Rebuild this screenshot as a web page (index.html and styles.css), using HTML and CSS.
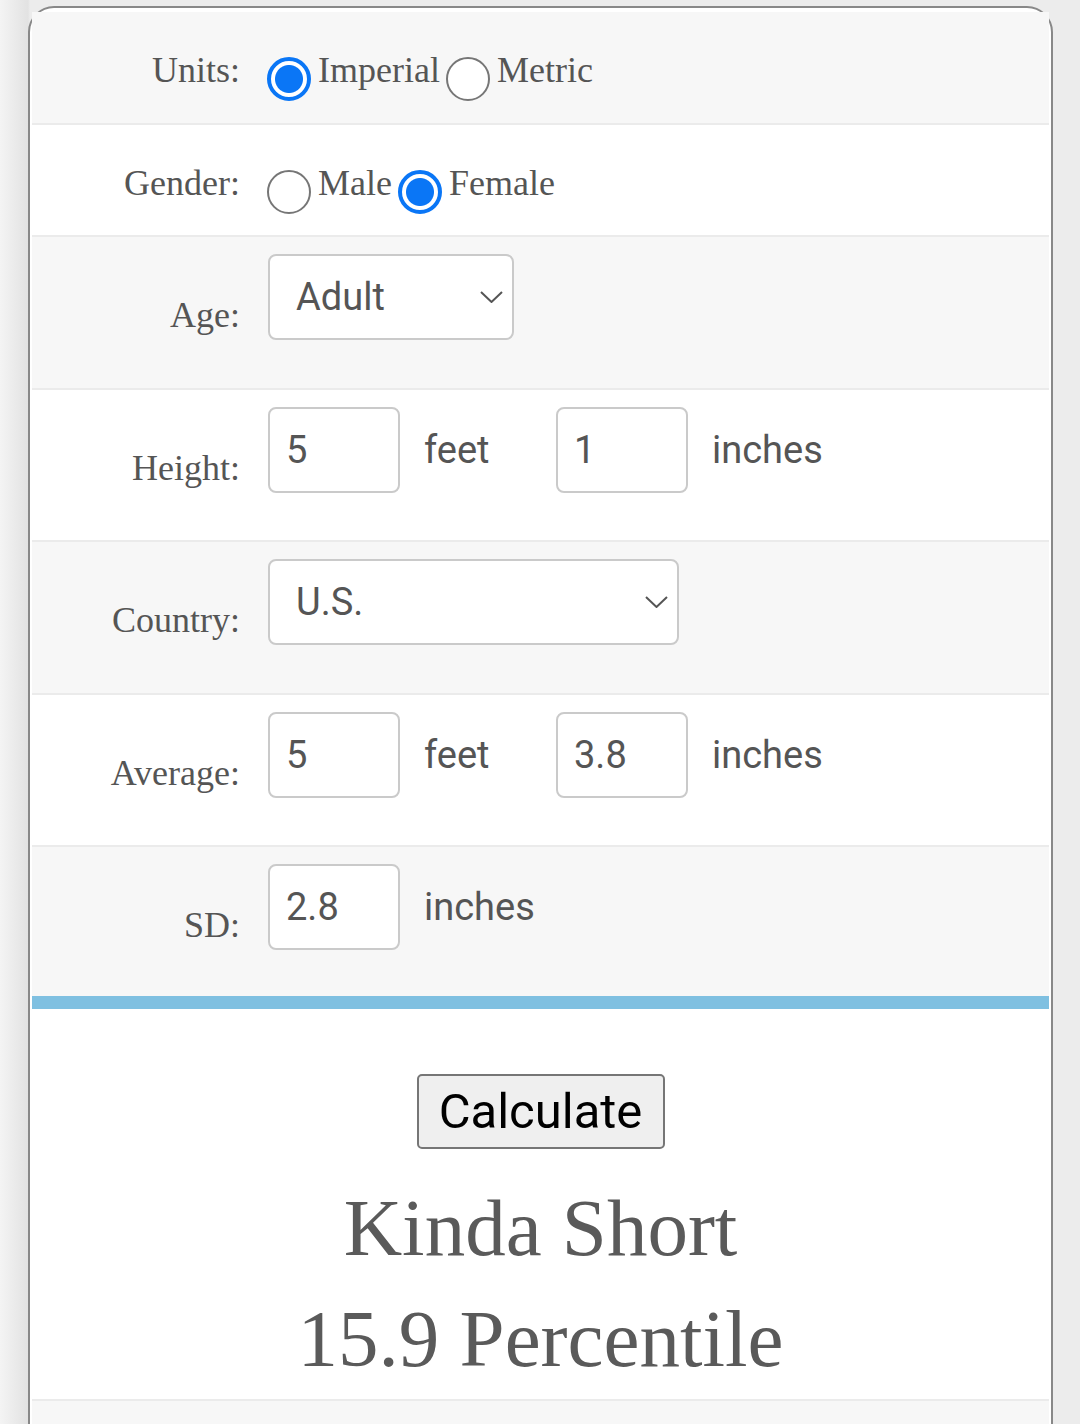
FILE: index.html
```html
<!DOCTYPE html>
<html lang="en">
<head>
<meta charset="utf-8">
<title>Height Percentile Calculator</title>
<link rel="stylesheet" href="styles.css">
</head>
<body>
<div class="card">
  <form class="form">
    <div class="row alt radio-row first-row">
      <div class="label">Units:</div>
      <div class="controls">
        <input type="radio" name="units" class="radio" checked><span class="opt">Imperial</span>
        <input type="radio" name="units" class="radio"><span class="opt">Metric</span>
      </div>
    </div>
    <div class="row radio-row">
      <div class="label">Gender:</div>
      <div class="controls">
        <input type="radio" name="gender" class="radio"><span class="opt">Male</span>
        <input type="radio" name="gender" class="radio" checked><span class="opt">Female</span>
      </div>
    </div>
    <div class="row alt field-row tall">
      <div class="label">Age:</div>
      <div class="controls">
        <div class="select-wrap select-age">
          <select class="select"><option>Adult</option></select>
          <svg class="chev" width="23" height="12" viewBox="0 0 23 12"><path d="M1 1 L11.5 11 L22 1" fill="none" stroke="#555" stroke-width="2"/></svg>
        </div>
      </div>
    </div>
    <div class="row field-row">
      <div class="label">Height:</div>
      <div class="controls">
        <input class="num" type="text" value="5"><span class="unit">feet</span>
        <input class="num" type="text" value="1"><span class="unit last">inches</span>
      </div>
    </div>
    <div class="row alt field-row tall">
      <div class="label">Country:</div>
      <div class="controls">
        <div class="select-wrap select-country">
          <select class="select"><option>U.S.</option></select>
          <svg class="chev" width="23" height="12" viewBox="0 0 23 12"><path d="M1 1 L11.5 11 L22 1" fill="none" stroke="#555" stroke-width="2"/></svg>
        </div>
      </div>
    </div>
    <div class="row field-row">
      <div class="label">Average:</div>
      <div class="controls">
        <input class="num" type="text" value="5"><span class="unit">feet</span>
        <input class="num" type="text" value="3.8"><span class="unit last">inches</span>
      </div>
    </div>
    <div class="row alt field-row last-row">
      <div class="label">SD:</div>
      <div class="controls">
        <input class="num" type="text" value="2.8"><span class="unit last">inches</span>
      </div>
    </div>
  </form>
  <div class="bar"></div>
  <div class="result">
    <button class="calc" type="button">Calculate</button>
    <div class="verdict">Kinda Short</div>
    <div class="verdict">15.9 Percentile</div>
  </div>
  <div class="row alt footer-row"></div>
</div>
</body>
</html>
```
FILE: styles.css
```css
html, body {
  margin: 0;
  padding: 0;
}
body {
  background: linear-gradient(to right, #f4f4f4 0, #e2e2e2 28px, #ececec 30px, #ececec 100%);
  padding: 6px 27px 0 28px;
  overflow: hidden;
  font-family: "Liberation Serif", "Times New Roman", serif;
  color: #555;
}
.card {
  background: #fff;
  border: 2px solid #888;
  border-bottom: none;
  border-radius: 26px 26px 0 0;
  padding: 4px 2px 0 2px;
  min-height: 1430px;
}
.form {
  margin: 0;
}
.row {
  display: flex;
  align-items: flex-start;
  border-bottom: 2px solid #ebebeb;
  box-sizing: border-box;
}
.row.alt {
  background: #f7f7f7;
}
.radio-row {
  height: 112px;
}
.radio-row.first-row {
  height: 113px;
}
.field-row {
  height: 152px;
}
.field-row.tall {
  height: 153px;
}
.last-row {
  height: 149px;
  border-bottom: none;
}
.label {
  width: 208px;
  margin-right: 28px;
  text-align: right;
  font-size: 36px;
  line-height: 40px;
  color: #555;
  flex: none;
}
.radio-row .label {
  padding-top: 38px;
}
.field-row .label {
  padding-top: 58px;
}
.controls {
  display: flex;
  align-items: center;
}
.radio-row .controls {
  align-items: flex-start;
  padding-top: 38px;
  margin-left: -1px;
}
.field-row .controls {
  padding-top: 17px;
}
.radio {
  appearance: none;
  -webkit-appearance: none;
  width: 44px;
  height: 44px;
  margin: 7px 0 0 0;
  box-sizing: border-box;
  border: 2px solid #767676;
  border-radius: 50%;
  background: #fff;
  flex: none;
}
.radio:checked {
  border: 4px solid #0a76f6;
  background: radial-gradient(circle, #0a76f6 0, #0a76f6 13.5px, #fff 14.5px);
}
.opt {
  font-size: 36px;
  line-height: 40px;
  color: #555;
  margin: 0 6px 0 7px;
}
.num {
  width: 132px;
  height: 86px;
  box-sizing: border-box;
  border: 2px solid #cacaca;
  border-radius: 8px;
  background: #fff;
  padding: 0 16px;
  margin: 0;
  font-family: Roboto, "Liberation Sans", sans-serif;
  font-size: 38px;
  color: #555;
  outline: none;
}
.unit {
  width: 156px;
  box-sizing: border-box;
  padding-left: 24px;
  font-family: Roboto, "Liberation Sans", sans-serif;
  font-size: 38px;
  color: #555;
}
.unit.last {
  width: auto;
}
.select-wrap {
  position: relative;
}
.select {
  appearance: none;
  -webkit-appearance: none;
  height: 86px;
  box-sizing: border-box;
  border: 2px solid #cacaca;
  border-radius: 8px;
  background: #fff;
  padding: 0 0 0 26px;
  margin: 0;
  font-family: Roboto, "Liberation Sans", sans-serif;
  font-size: 38px;
  color: #555;
  outline: none;
}
.select-age .select {
  width: 246px;
}
.select-country .select {
  width: 411px;
}
.chev {
  position: absolute;
  right: 11px;
  top: 37px;
  pointer-events: none;
}
.bar {
  height: 13px;
  background: #7fc0e1;
}
.result {
  text-align: center;
  padding-top: 65px;
  padding-bottom: 4px;
  border-bottom: 2px solid #ebebeb;
}
.calc {
  width: 248px;
  height: 75px;
  box-sizing: border-box;
  background: #efefef;
  border: 2px solid #767676;
  border-radius: 5px;
  font-family: Roboto, "Liberation Sans", sans-serif;
  font-size: 49px;
  color: #000;
  padding: 0;
  margin: 0 0 24px 0;
  vertical-align: top;
}
.verdict {
  font-size: 81px;
  line-height: 111px;
  color: #5a5a5a;
}
.footer-row {
  height: 120px;
  border-bottom: none;
}
```
